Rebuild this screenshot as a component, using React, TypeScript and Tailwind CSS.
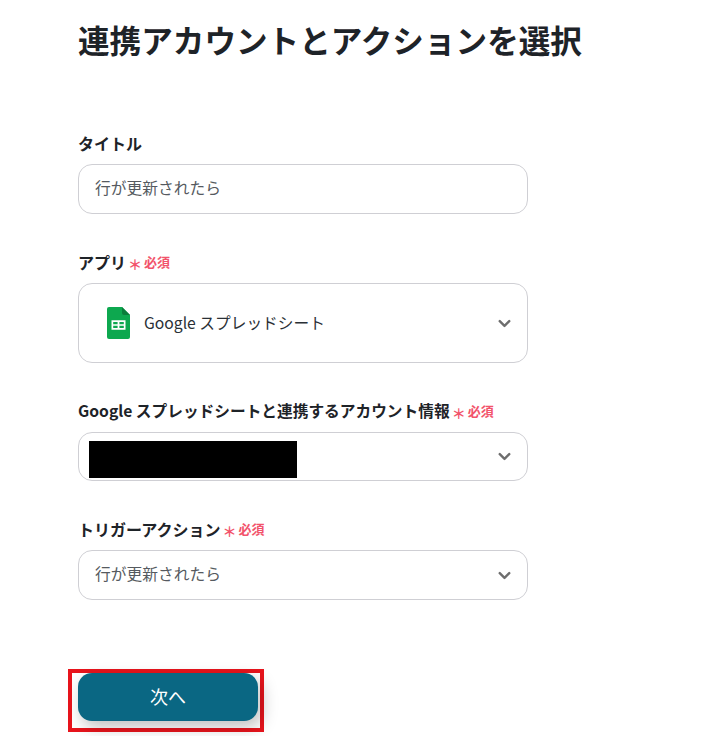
import { ChevronDown } from 'lucide-react';

const font = { fontFamily: '"Noto Sans CJK JP", "Noto Sans", sans-serif' };

function Required() {
  return (
    <span className="ml-[2px] mt-[1px] inline-flex items-center text-[#f2536b] font-bold">
      <span className="text-[14px] leading-none mt-[6px] mr-[2px] font-bold">＊</span>
      <span className="text-[13px] leading-none">必須</span>
    </span>
  );
}

function Chevron() {
  return <ChevronDown className="w-[19px] h-[19px] text-[#6e6e6e]" strokeWidth={3} />;
}

function SheetsIcon() {
  return (
    <svg width="23" height="32" viewBox="0 0 23 32">
      <path d="M2 0H15L23 8V30a2 2 0 0 1-2 2H2a2 2 0 0 1-2-2V2a2 2 0 0 1 2-2Z" fill="#0da84f" />
      <path d="M15 0L23 8H17a2 2 0 0 1-2-2Z" fill="#0a7d3b" />
      <path d="M4.5 13.3H18.5V22.7H4.5ZM6.2 15V17.2H10.6V15ZM12.4 15V17.2H16.8V15ZM6.2 18.8V21H10.6V18.8ZM12.4 18.8V21H16.8V18.8Z" fill="#fff" fillRule="evenodd" />
    </svg>
  );
}

export default function App() {
  return (
    <div className="h-[736px] w-[717px] overflow-hidden bg-white text-[#1e2328] pl-[78px]" style={font}>
      <h1 className="pt-[16px] h-[131px] text-[31.6px] leading-[46px] font-bold">連携アカウントとアクションを選択</h1>

      <div className="w-[450px] flex flex-col">
        <label className="h-[33px] text-[16px] leading-[24px] font-bold">タイトル</label>
        <div className="h-[50px] rounded-[14px] border border-[#cfcfd4] pb-[2px] px-[16px] flex items-center text-[15.75px] text-[#555a60]">
          行が更新されたら
        </div>

        <label className="mt-[36px] h-[33px] flex items-start text-[16px] leading-[24px] font-bold">
          アプリ
          <Required />
        </label>
        <div className="h-[80px] rounded-[14px] border border-[#cfcfd4] pl-[28px] pr-[13px] flex items-center justify-between">
          <div className="flex items-center gap-[14px] text-[15.7px] text-[#2a3036]">
            <SheetsIcon />
            <span className="mb-[1px]">Google スプレッドシート</span>
          </div>
          <Chevron />
        </div>

        <label className="mt-[36px] h-[33px] flex items-start text-[15.7px] leading-[24px] font-bold">
          Google スプレッドシートと連携するアカウント情報
          <Required />
        </label>
        <div className="h-[49px] rounded-[14px] border border-[#cfcfd4] pl-[10px] pr-[13px] flex items-center justify-between">
          <div className="w-[208px] h-[37px] mt-[6px] bg-black" />
          <Chevron />
        </div>

        <label className="mt-[36px] h-[33px] flex items-start text-[16px] leading-[24px] font-bold">
          トリガーアクション
          <Required />
        </label>
        <div className="h-[50px] rounded-[14px] border border-[#cfcfd4] pl-[16px] pr-[13px] flex items-center justify-between text-[15.75px] text-[#555a60]">
          <span className="mb-[2px]">行が更新されたら</span>
          <Chevron />
        </div>
      </div>

      <div className="mt-[69px] ml-[-10px] w-[196px] h-[63px] border-[4px] border-[#e8141c] pl-[6px]">
        <button className="block w-[180px] h-[48px] pb-[2px] rounded-[14px] bg-[#0a6783] text-white text-[18px] shadow-[4px_6px_16px_rgba(0,0,0,0.25)]">
          次へ
        </button>
      </div>
    </div>
  );
}
